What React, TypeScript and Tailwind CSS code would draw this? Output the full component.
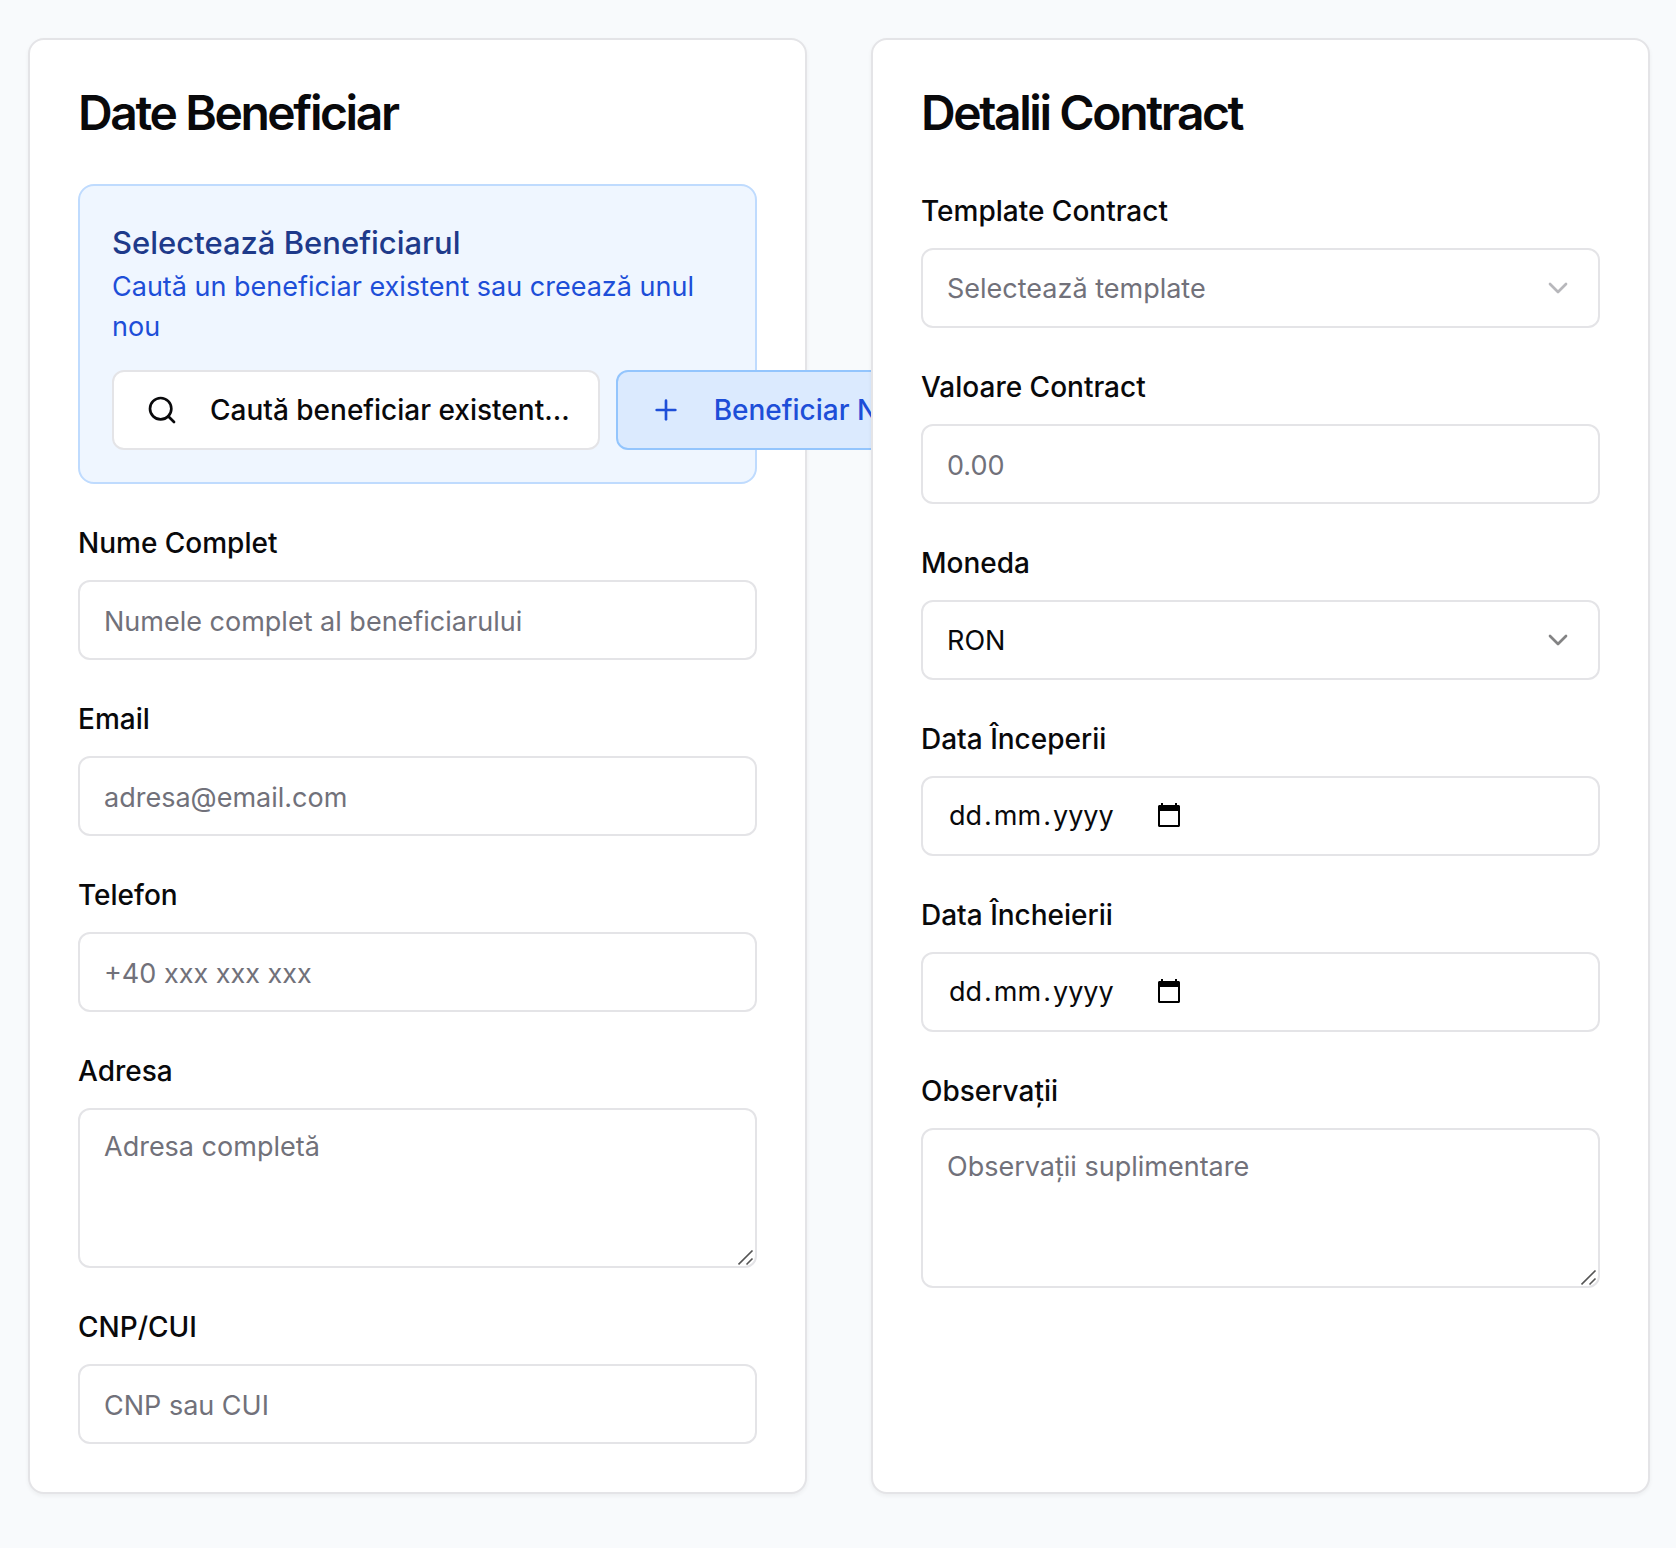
import type { ReactNode } from "react";
import { ChevronDown, Plus, Search } from "lucide-react";

const control =
  "block w-full rounded-xl border-2 border-[#e4e4e7] bg-white px-6 text-[27px] text-[#09090b] outline-none placeholder:text-[#71717a] placeholder:opacity-100 focus:border-blue-400";

function Card({ title, children }: { title: string; children: ReactNode }) {
  return (
    <section className="min-w-0 rounded-2xl border-2 border-[#e4e4e7] bg-white p-12 shadow-[0_2px_4px_0_rgb(0_0_0/0.05)]">
      <h2 className="mb-[46px] text-[48px] leading-[50px] font-semibold tracking-tighter">{title}</h2>
      <div className="flex flex-col gap-8">{children}</div>
    </section>
  );
}

function Field({ id, label, children }: { id: string; label: string; children: ReactNode }) {
  return (
    <div>
      <label htmlFor={id} className="mb-[10px] block text-[28px] leading-[54px] font-medium">
        {label}
      </label>
      {children}
    </div>
  );
}

function TextField({ id, label, placeholder, type = "text" }: { id: string; label: string; placeholder: string; type?: string }) {
  return (
    <Field id={id} label={label}>
      <input id={id} type={type} placeholder={placeholder} className={`${control} h-20 pt-0.5`} />
    </Field>
  );
}

function TextAreaField({ id, label, placeholder }: { id: string; label: string; placeholder: string }) {
  return (
    <Field id={id} label={label}>
      <div className="relative">
        <textarea id={id} placeholder={placeholder} className={`${control} h-40 resize-none pt-[17px] pb-4 leading-10`} />
        <svg viewBox="0 0 16 16" className="pointer-events-none absolute right-[3px] bottom-[2px] size-4" fill="none" stroke="#555" strokeWidth="1.6" aria-hidden="true">
          <path d="M0.500 14.500 14.500 0.500M8.500 14.500l6-6" />
        </svg>
      </div>
    </Field>
  );
}

function SelectField({ id, label, options, muted = false }: { id: string; label: string; options: string[]; muted?: boolean }) {
  return (
    <Field id={id} label={label}>
      <div className={`relative ${muted ? "text-[#71717a]" : "text-[#09090b]"}`}>
        <select id={id} className="block h-20 w-full appearance-none rounded-xl border-2 border-[#e4e4e7] bg-white pt-0.5 pr-16 pl-6 text-[27px] outline-none focus:border-blue-400">
          {options.map((option) => (
            <option key={option}>{option}</option>
          ))}
        </select>
        <ChevronDown className="pointer-events-none absolute top-6 right-[26px] size-8 opacity-50" aria-hidden="true" />
      </div>
    </Field>
  );
}

function DateField({ id, label }: { id: string; label: string }) {
  const part = "field-sizing-content px-0.5 outline-none placeholder:text-[#09090b] placeholder:opacity-100";
  return (
    <Field id={id} label={label}>
      <div role="group" aria-label={label} className="flex h-20 items-center rounded-xl border-2 border-[#e4e4e7] bg-white px-6 text-[27px]">
        <input id={id} aria-label={`${label}, zi`} placeholder="dd" maxLength={2} className={part} />
        <span>.</span>
        <input aria-label={`${label}, lună`} placeholder="mm" maxLength={2} className={part} />
        <span>.</span>
        <input aria-label={`${label}, an`} placeholder="yyyy" maxLength={4} className={part} />
        <button type="button" aria-label="Deschide calendarul" className="ml-10 px-0.5 pb-0.5">
          <svg viewBox="0 0 22 24" className="h-6 w-[22px]" aria-hidden="true">
            <path
              fill="black"
              fillRule="evenodd"
              d="M3 0h2v2h12V0h2v2h1.500c.8 0 1.500.7 1.500 1.500v19c0 .8-.7 1.500-1.500 1.500h-19C.7 24 0 23.300 0 22.500v-19C0 2.700.7 2 1.500 2H3zM2 8v14h18V8z"
            />
          </svg>
        </button>
      </div>
    </Field>
  );
}

const actionButton =
  "flex h-20 shrink-0 items-center gap-8 rounded-xl border-2 pl-8 pr-7 text-[28px] font-medium whitespace-nowrap";

export default function App() {
  return (
    <main className="min-h-screen bg-[#f8fafc] pt-[38px] pr-[26px] pb-[54px] pl-7 font-['Inter',sans-serif] text-[#09090b]">
      <form className="grid grid-cols-2 gap-16">
        <Card title="Date Beneficiar">
          <div className="rounded-2xl border-2 border-[#bfdbfe] bg-[#eff6ff] px-8 pt-[33px] pb-8">
            <h3 className="text-[31px] leading-[48px] font-medium text-[#1e3a8a]">Selectează Beneficiarul</h3>
            <p className="text-[27px] leading-10 text-[#1d4ed8]">Caută un beneficiar existent sau creează unul nou</p>
            <div className="mt-[23px] flex gap-4">
              <button type="button" className={`${actionButton} border-[#e4e4e7] bg-white`}>
                <Search className="size-8" aria-hidden="true" />
                Caută beneficiar existent...
              </button>
              <button type="button" className={`${actionButton} border-[#93c5fd] bg-[#dbeafe] text-[#1d4ed8]`}>
                <Plus className="size-8" aria-hidden="true" />
                Beneficiar Nou
              </button>
            </div>
          </div>
          <TextField id="nume" label="Nume Complet" placeholder="Numele complet al beneficiarului" />
          <TextField id="email" label="Email" type="email" placeholder="adresa@email.com" />
          <TextField id="telefon" label="Telefon" type="tel" placeholder="+40 xxx xxx xxx" />
          <TextAreaField id="adresa" label="Adresa" placeholder="Adresa completă" />
          <TextField id="cnp" label="CNP/CUI" placeholder="CNP sau CUI" />
        </Card>
        <Card title="Detalii Contract">
          <SelectField id="template" label="Template Contract" options={["Selectează template"]} muted />
          <TextField id="valoare" label="Valoare Contract" type="number" placeholder="0.00" />
          <SelectField id="moneda" label="Moneda" options={["RON", "EUR", "USD"]} />
          <DateField id="inceput" label="Data Începerii" />
          <DateField id="incheiere" label="Data Încheierii" />
          <TextAreaField id="observatii" label="Observații" placeholder="Observații suplimentare" />
        </Card>
      </form>
    </main>
  );
}
